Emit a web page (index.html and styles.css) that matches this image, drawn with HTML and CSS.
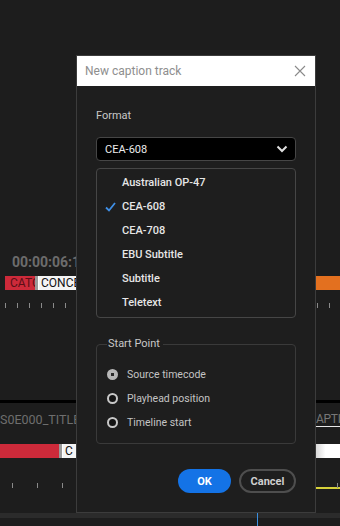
FILE: index.html
```html
<!DOCTYPE html>
<html lang="en">
<head>
    <meta charset="utf-8" />
    <title>New caption track</title>
    <link rel="stylesheet" href="styles.css">
</head>
<body>
    <div class="timeline">
        <div class="fila tiempo"><span class="izq">00:00:06:1</span></div>
        <div class="fila clips">
            <span class="izq tramo"><span class="clip rojo corto">CATC</span><span class="marca"></span><span class="clip blanco">CONCE</span></span>
            <span class="clip naranja"></span>
        </div>
        <div class="fila ticks"><span></span><span></span><span></span><span></span><span></span><span></span><span></span><span></span><span></span><span></span><span></span><span></span><span></span><span></span><span></span><span></span><span></span><span></span><span></span><span></span><span></span><span></span><span></span><span></span><span></span><span></span><span></span><span></span></div>
        <div class="fila negra"></div>
        <div class="fila titulos">
            <span class="izq">S0E000_TITLE_</span>
            <span class="derecha">APTIC</span>
        </div>
        <div class="fila clips dos">
            <span class="izq tramo"><span class="clip rojo largo"></span><span class="marca"></span><span class="clip blanco">C</span></span>
            <span class="clip degradado"></span>
        </div>
        <div class="fila ticks anchos"><span></span><span></span><span></span><span></span><span></span><span></span><span></span><span></span><span></span><span></span><span></span><span></span><span></span><span></span></div>
        <div class="fila amarilla"></div>
        <div class="fila barra"><span class="cabezal"></span></div>
    </div>

    <div class="dialogo">
        <div class="titulo">
            <span>New caption track</span>
            <svg class="cerrar" width="12" height="12" viewBox="0 0 12 12"><path d="M1 1L11 11M11 1L1 11" stroke="#8a8a8a" stroke-width="1.1" fill="none"/></svg>
        </div>
        <div class="cuerpo">
            <div class="etiqueta">Format</div>
            <div class="selector">
                <span>CEA-608</span>
                <svg width="12" height="8" viewBox="0 0 12 8"><path d="M1.5 1.5L6 6L10.5 1.5" stroke="#e0e0e0" stroke-width="2" fill="none"/></svg>
            </div>
            <ul class="lista">
                <li>Australian OP-47</li>
                <li class="activo"><svg class="check" width="11" height="10" viewBox="0 0 11 10"><path d="M1 5.5L4 8.5L10 1" stroke="#3f8fe6" stroke-width="1.8" fill="none"/></svg>CEA-608</li>
                <li>CEA-708</li>
                <li>EBU Subtitle</li>
                <li>Subtitle</li>
                <li>Teletext</li>
            </ul>
            <div class="grupo">
                <span class="leyenda">Start Point</span>
                <label class="radio"><span class="circulo marcado"></span>Source timecode</label>
                <label class="radio"><span class="circulo"></span>Playhead position</label>
                <label class="radio"><span class="circulo"></span>Timeline start</label>
            </div>
            <div class="botones">
                <button class="boton ok">OK</button>
                <button class="boton cancelar">Cancel</button>
            </div>
        </div>
    </div>
</body>
</html>
```

FILE: styles.css
```css
*{
    padding:0px;
    margin:0px;
    box-sizing:border-box;
}
body{
    width:340px;
    height:526px;
    overflow:hidden;
    position:relative;
    background:#1d1d1d;
    font-family:Roboto, "Noto Sans", sans-serif;
}

/* timeline de fondo */
.timeline{ padding-top:253px; }
.fila{ display:flex; white-space:nowrap; overflow:hidden; }
.izq{ display:block; width:76px; flex:none; overflow:hidden; }
.tramo{ display:flex; }
.tiempo{
    height:18px;
    padding-left:12px;
    font-size:14px;
    font-weight:bold;
    line-height:18px;
    color:#6c6c6c;
}
.tiempo .izq{ width:64px; }
.clips{ height:14px; margin-top:5px; padding-left:5px; }
.clips .izq{ width:71px; }
.clip{ height:14px; font-size:12px; line-height:14px; overflow:hidden; flex:none; }
.rojo{ background:#cd2a3a; color:#5a0f16; padding-left:5px; }
.corto{ width:30px; }
.largo{ width:59px; }
.marca{ width:4px; height:14px; background:#9a9a9a; border-right:1px solid #fff; flex:none; }
.blanco{ width:120px; background:#f4f4f4; color:#111; padding-left:2px; }
.naranja{ margin-left:auto; width:24px; background:#e3701f; }
.dos{ margin-top:17px; padding-left:0; }
.dos .izq{ width:76px; }
.degradado{ margin-left:auto; width:24px; background:linear-gradient(to right, #d8d8d8, #ffffff 40%); }
.ticks{ height:5px; margin-top:13px; padding-left:5px; gap:11px; }
.ticks span{ width:1px; height:5px; background:#8a8a8a; flex:none; }
.negra{ height:3px; margin-top:92px; background:#000; }
.titulos{
    height:17px;
    margin-top:7px;
    font-size:12.5px;
    line-height:19px;
    color:#6e6e6e;
    justify-content:space-between;
}
.derecha{
    width:24px;
    overflow:hidden;
    font-size:12px;
    letter-spacing:-0.3px;
    color:#777;
    border-bottom:1px solid #e8e8e8;
    height:17px;
}
.anchos{ margin-top:25px; padding-left:12px; gap:24px; }
.amarilla{ height:2px; margin-top:-1px; margin-left:316px; background:#d6d13a; }
.barra{ position:relative; height:5px; margin-top:24px; background:#2b2b2b; overflow:visible; }
.cabezal{ position:absolute; left:257px; top:0; width:1px; height:20px; background:#3a8fe0; }

/* dialogo */
.dialogo{
    position:absolute;
    left:76px;
    top:55px;
    width:240px;
    height:458px;
    background:#1e1e1e;
    border:1px solid #3c3c3c;
}
.titulo{
    height:30px;
    background:#fff;
    display:flex;
    align-items:center;
    justify-content:space-between;
    padding:0 9px 0 8px;
    font-size:12px;
    color:#8e8e8e;
}
.cuerpo{ padding:22px 19px 0; }
.etiqueta{ font-size:11px; line-height:16px; color:#c8c8c8; }
.selector{
    margin-top:13px;
    height:24px;
    background:#000;
    border:1px solid #464646;
    border-radius:4px;
    display:flex;
    align-items:center;
    justify-content:space-between;
    padding:0 7px 0 8px;
    font-size:11px;
    color:#ececec;
}
.lista{
    list-style:none;
    margin-top:7px;
    height:150px;
    border:1px solid #464646;
    border-radius:4px;
    padding:2px 0 0 25px;
}
.lista li{
    position:relative;
    height:24px;
    line-height:24px;
    font-size:11px;
    font-weight:500;
    color:#e6e6e6;
}
.check{ position:absolute; left:-17px; top:7px; }
.grupo{
    margin-top:26px;
    height:100px;
    border:1px solid #3a3a3a;
    border-radius:4px;
    padding:0 0 0 10px;
    display:flex;
    flex-direction:column;
}
.leyenda{
    align-self:flex-start;
    margin-top:-9px;
    padding:0 3px 0 1px;
    background:#1e1e1e;
    font-size:11px;
    line-height:16px;
    color:#c8c8c8;
}
.leyenda + .radio{ margin-top:10px; }
.radio{
    display:flex;
    align-items:center;
    height:24px;
    font-size:10.5px;
    color:#c4c4c4;
}
.circulo{
    width:11px;
    height:11px;
    border-radius:50%;
    border:2px solid #c8c8c8;
    background:#141414;
    margin-right:9px;
}
.marcado{
    background:radial-gradient(circle, #2a2a2a 0 1.5px, #b8b8b8 2px);
    border-color:#b8b8b8;
}
.botones{ display:flex; justify-content:flex-end; gap:8px; margin-top:25px; }
.boton{
    height:24px;
    border-radius:12px;
    font-family:Roboto, "Noto Sans", sans-serif;
    font-size:11px;
    font-weight:bold;
}
.ok{ width:53px; background:#1473e6; color:#fff; border:none; }
.cancelar{ width:57px; background:transparent; color:#cfcfcf; border:2px solid #4e4e4e; }
```
